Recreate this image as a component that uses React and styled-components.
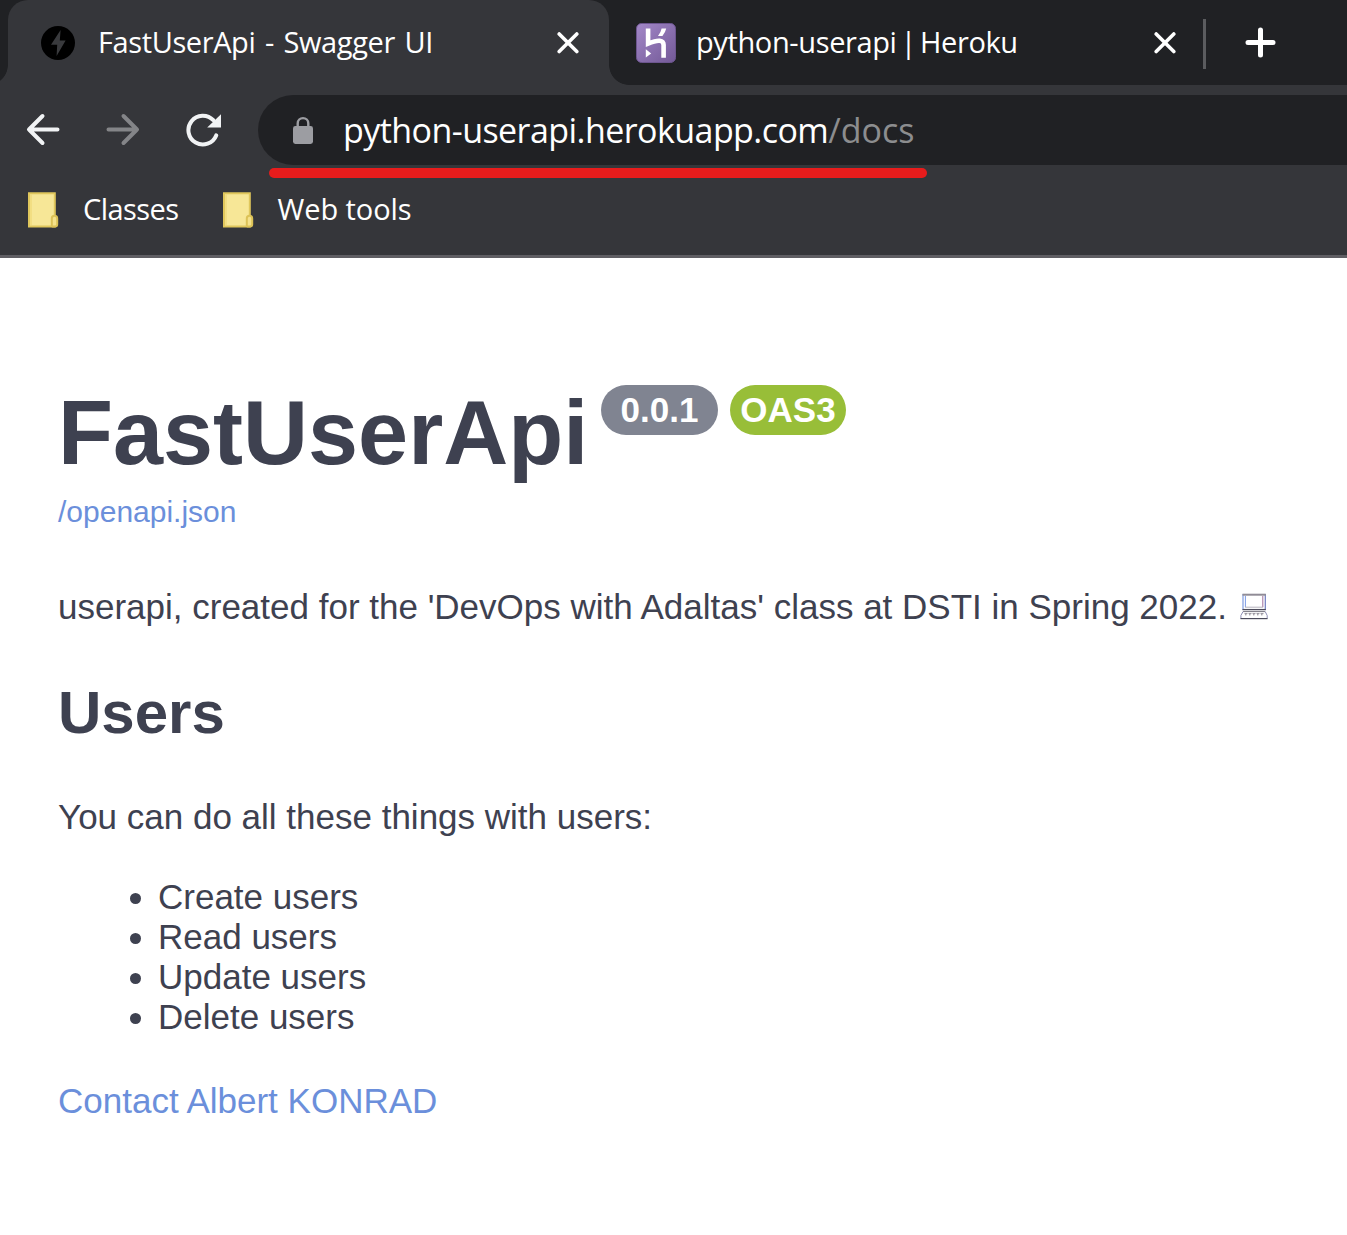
import React from "react";
import styled, { createGlobalStyle } from "styled-components";

const GlobalStyle = createGlobalStyle`
  * { box-sizing: border-box; }
  body { margin: 0; background: #fff; overflow: hidden; }
`;

const Page = styled.div`
  width: 1347px;
  height: 1235px;
  display: flex;
  flex-direction: column;
  overflow: hidden;
  background: #fff;
`;

const Chrome = styled.header`
  position: relative;
  height: 258px;
  flex: none;
  display: flex;
  flex-direction: column;
  background: #35363a;
  border-bottom: 3px solid #5f5e63;
  color: #fff;
  font-family: "Open Sans", "Noto Sans", sans-serif;
`;

const TabStrip = styled.div`
  height: 85px;
  flex: none;
  display: flex;
  align-items: stretch;
  padding-left: 8px;
  background: #202124;
  overflow: hidden;
`;

const Tab = styled.div`
  position: relative;
  width: ${(p) => p.$width}px;
  display: flex;
  align-items: center;
  padding: 0 ${(p) => p.$right}px 0 ${(p) => p.$left}px;
  border-radius: 20px 20px 0 0;
  background: ${(p) => (p.$active ? "#35363a" : "transparent")};

  &::before,
  &::after {
    content: "";
    display: ${(p) => (p.$active ? "block" : "none")};
    position: absolute;
    bottom: 0;
    width: 20px;
    height: 20px;
  }
  &::before {
    left: -20px;
    background: radial-gradient(circle at 0 0, transparent 19.5px, #35363a 20.2px);
  }
  &::after {
    right: -20px;
    background: radial-gradient(circle at 100% 0, transparent 19.5px, #35363a 20.2px);
  }
`;

const Label = styled.span`
  flex: ${(p) => (p.$grow ? 1 : "none")};
  padding-bottom: ${(p) => p.$lift || 0}px;
  font-size: ${(p) => p.$size}px;
  line-height: 40px;
  letter-spacing: ${(p) => p.$track || 0}px;
  word-spacing: ${(p) => p.$word || 0}px;
  white-space: pre;
`;

const Icon = styled.svg`
  display: block;
  flex: none;
  margin-right: ${(p) => p.$gap || 0}px;
`;

const TabDivider = styled.div`
  width: 3px;
  height: 50px;
  margin: 19px 39px 0 0;
  background: #5b5c5f;
`;

const NewTab = styled.div`
  display: flex;
  align-items: center;
`;

const Toolbar = styled.div`
  height: 90px;
  flex: none;
  display: flex;
  align-items: center;
  padding-left: 26px;
`;

const AddressBar = styled.div`
  flex: 1;
  height: 70px;
  display: flex;
  align-items: center;
  padding-left: 34px;
  background: #202124;
  border-radius: 35px 0 0 35px;
`;

const UrlPath = styled.span`
  color: #8c8d8f;
  letter-spacing: 0;
`;

const Underline = styled.div`
  position: absolute;
  left: 269px;
  top: 168px;
  width: 658px;
  height: 10px;
  border-radius: 5px;
  background: #e71c1c;
`;

const Bookmarks = styled.nav`
  height: 70px;
  display: flex;
  align-items: center;
  gap: 44px;
  padding-left: 28px;
`;

const Bookmark = styled.div`
  display: flex;
  align-items: center;
`;

const Content = styled.main`
  display: flex;
  flex-direction: column;
  align-items: flex-start;
  padding: 124px 58px 0;
  color: #3e4150;
  font-family: "Liberation Sans", Arial, sans-serif;
  font-size: 35px;
  line-height: 40px;
`;

const TitleRow = styled.div`
  display: flex;
  align-items: flex-start;
`;

const Title = styled.h1`
  width: 543px;
  margin: 0;
  font-size: 90px;
  line-height: 103px;
  font-weight: 700;
  white-space: nowrap;
`;

const Badge = styled.span`
  width: ${(p) => p.$width}px;
  height: 50px;
  margin: 3px 12px 0 0;
  border-radius: 25px;
  background: ${(p) => p.$color};
  color: #fff;
  font-weight: 700;
  line-height: 50px;
  text-align: center;
`;

const SpecLink = styled.a`
  margin-top: 10px;
  color: #6b8fdb;
  font-size: 30px;
  line-height: 34px;
`;

const Paragraph = styled.p`
  display: flex;
  align-items: center;
  gap: 3px;
  margin: ${(p) => p.$top}px 0 0;
  white-space: nowrap;
`;

const Heading = styled.h2`
  margin: 51px 0 0;
  font-size: 60px;
  line-height: 69px;
  font-weight: 700;
`;

const List = styled.ul`
  display: flex;
  flex-direction: column;
  margin: 40px 0 0 72px;
  padding: 0;
  list-style: none;
`;

const Item = styled.li`
  display: flex;
  align-items: center;
  gap: 17px;

  &::before {
    content: "";
    width: 11px;
    height: 11px;
    margin-top: 3px;
    border-radius: 50%;
    background: #3e4150;
  }
`;

const ContactLink = styled.a`
  margin-top: 44px;
  color: #6b8fdb;
`;

const CloseIcon = () => (
  <Icon width="22" height="22" viewBox="0 0 22 22" fill="none" stroke="#fff" strokeWidth="3.6" strokeLinecap="round">
    <path d="M2.2 1.9 19.8 19.5M19.8 1.9 2.2 19.5" />
  </Icon>
);

const BoltIcon = () => (
  <Icon width="34" height="34" viewBox="0 0 34 34" $gap={23}>
    <circle cx="17" cy="17" r="17" fill="#000" />
    <path d="M19.6 4 10 18.8H16.2L15.6 30 24.6 14.6H18.8Z" fill="#393a3d" />
  </Icon>
);

const HerokuIcon = () => (
  <Icon width="40" height="40" viewBox="0 0 40 40" $gap={20}>
    <defs>
      <linearGradient id="heroku" x1="0" y1="0" x2="1" y2="1">
        <stop offset="0" stopColor="#a388c8" />
        <stop offset="1" stopColor="#735997" />
      </linearGradient>
    </defs>
    <rect x=".5" y=".5" width="39" height="39" rx="5" fill="url(#heroku)" stroke="#6d568f" />
    <path d="M12.1 5.5V20.5Q27.6 14.2 27.6 22V34.8" fill="none" stroke="#fff" strokeWidth="4.6" />
    <path d="M25.6 5.5H30.2Q29.3 9.8 26.4 12.9H22Q24.9 9.4 25.6 5.5ZM9.8 26.2 15.2 30.4 9.8 34.6Z" fill="#fff" />
  </Icon>
);

const ArrowIcon = ({ color, forward, gap }) => (
  <Icon width="34" height="34" viewBox="0 0 34 34" $gap={gap} fill="none" stroke={color} strokeWidth="4" strokeLinecap="round" strokeLinejoin="round">
    <path d={forward ? "M2.5 16.5H31M17.5 3 31 16.5 17.5 30" : "M31.5 16.5H3M16.5 3 3 16.5 16.5 30"} />
  </Icon>
);

const ReloadIcon = () => (
  <Icon width="36" height="34" viewBox="0 0 36 34" $gap={36}>
    <path d="M30.2 22.4A14.4 14.4 0 1 1 27.3 7.2" fill="none" stroke="#f1f3f4" strokeWidth="4" strokeLinecap="round" />
    <path d="M35 1.2V14.6H21.2Z" fill="#f1f3f4" />
  </Icon>
);

const LockIcon = () => (
  <Icon width="22" height="28" viewBox="0 0 22 28" $gap={29}>
    <path d="M5.7 12V7.4a5.3 5.3 0 0 1 10.6 0V12" fill="none" stroke="#9c9da2" strokeWidth="2.4" />
    <rect x="1" y="10" width="20" height="18" rx="2.4" fill="#9c9da2" />
  </Icon>
);

const FolderIcon = () => (
  <Icon width="31" height="36" viewBox="0 0 31 36" $gap={24}>
    <path d="M1 1.2H26.8V34.6H1Z" fill="#f7e797" stroke="#e0c75c" strokeWidth="2" />
    <path d="M3 2.5V33" stroke="#efd976" strokeWidth="1.2" />
    <path d="M23.8 34.4V26.4Q23.8 23.8 26.5 23.8T29.2 26.4V32.6Q29.2 34.6 27 34.6H23.8" fill="#f5e28b" stroke="#dcc257" strokeWidth="2" />
  </Icon>
);

const LaptopIcon = () => (
  <Icon width="28" height="28" viewBox="0 0 28 28" fill="none" strokeWidth="1">
    <path d="M3 1V17" stroke="#7f9be0" strokeWidth="1.2" />
    <path d="M25.3 1V17" stroke="#6f7cc0" strokeWidth="1.2" />
    <path d="M2.5 1.7H25.8" stroke="#908c96" strokeWidth="2" />
    <path d="M5.4 3V14" stroke="#7b9be6" />
    <path d="M22.8 3V14" stroke="#a0709c" />
    <path d="M5 14.2H23.2" stroke="#b5b3bd" />
    <path d="M2.5 16.6H25.8" stroke="#4d4c5c" strokeWidth="1.3" />
    <path d="M3 18.6H25.2" stroke="#77747f" />
    <path d="M3 18.6 .9 22.5V25.6M25.2 18.6 27.2 22.5V25.6" stroke="#8f8fb5" />
    <path d="M.5 25.6H27.5" stroke="#4d4c5c" strokeWidth="1.2" />
    <path d="M4.5 20.6H23.5" strokeDasharray="3 1" stroke="#94909a" />
    <path d="M5 21.8H23.5" strokeDasharray="1.5 2.5" stroke="#8a8690" />
  </Icon>
);

const USER_ACTIONS = ["Create users", "Read users", "Update users", "Delete users"];
const BOOKMARKS = [
  { name: "Classes", track: -0.55 },
  { name: "Web tools", track: -0.1 },
];

export default function App() {
  return (
    <Page>
      <GlobalStyle />
      <Chrome>
        <TabStrip>
          <Tab $active $width={601} $left={33} $right={30}>
            <BoltIcon />
            <Label $grow $size={29} $track={-0.4} $word={2.5} $lift={2}>FastUserApi - Swagger UI</Label>
            <CloseIcon />
          </Tab>
          <Tab $width={594} $left={27} $right={27}>
            <HerokuIcon />
            <Label $grow $size={29} $track={-0.38} $word={-3.2} $lift={2}>python-userapi | Heroku</Label>
            <CloseIcon />
          </Tab>
          <TabDivider />
          <NewTab>
            <Icon width="31" height="31" viewBox="0 0 31 31" fill="none" stroke="#fff" strokeWidth="5" strokeLinecap="round">
              <path d="M15.5 3V28M3 15.5H28" />
            </Icon>
          </NewTab>
        </TabStrip>
        <Toolbar>
          <ArrowIcon color="#f1f3f4" gap={46} />
          <ArrowIcon color="#848588" forward gap={46} />
          <ReloadIcon />
          <AddressBar>
            <LockIcon />
            <Label $size={34} $track={-0.56}>
              python-userapi.herokuapp.com<UrlPath>/docs</UrlPath>
            </Label>
          </AddressBar>
        </Toolbar>
        <Bookmarks>
          {BOOKMARKS.map((b) => (
            <Bookmark key={b.name}>
              <FolderIcon />
              <Label $size={29} $track={b.track} $lift={2}>{b.name}</Label>
            </Bookmark>
          ))}
        </Bookmarks>
        <Underline />
      </Chrome>
      <Content>
        <TitleRow>
          <Title>FastUserApi</Title>
          <Badge $width={117} $color="#808491">0.0.1</Badge>
          <Badge $width={116} $color="#98be38">OAS3</Badge>
        </TitleRow>
        <SpecLink>/openapi.json</SpecLink>
        <Paragraph $top={58}>
          <Label $size={35}>userapi, created for the 'DevOps with Adaltas' class at DSTI in Spring 2022. </Label>
          <LaptopIcon />
        </Paragraph>
        <Heading>Users</Heading>
        <Paragraph $top={50}>You can do all these things with users:</Paragraph>
        <List>
          {USER_ACTIONS.map((a) => (
            <Item key={a}>{a}</Item>
          ))}
        </List>
        <ContactLink>Contact Albert KONRAD</ContactLink>
      </Content>
    </Page>
  );
}
